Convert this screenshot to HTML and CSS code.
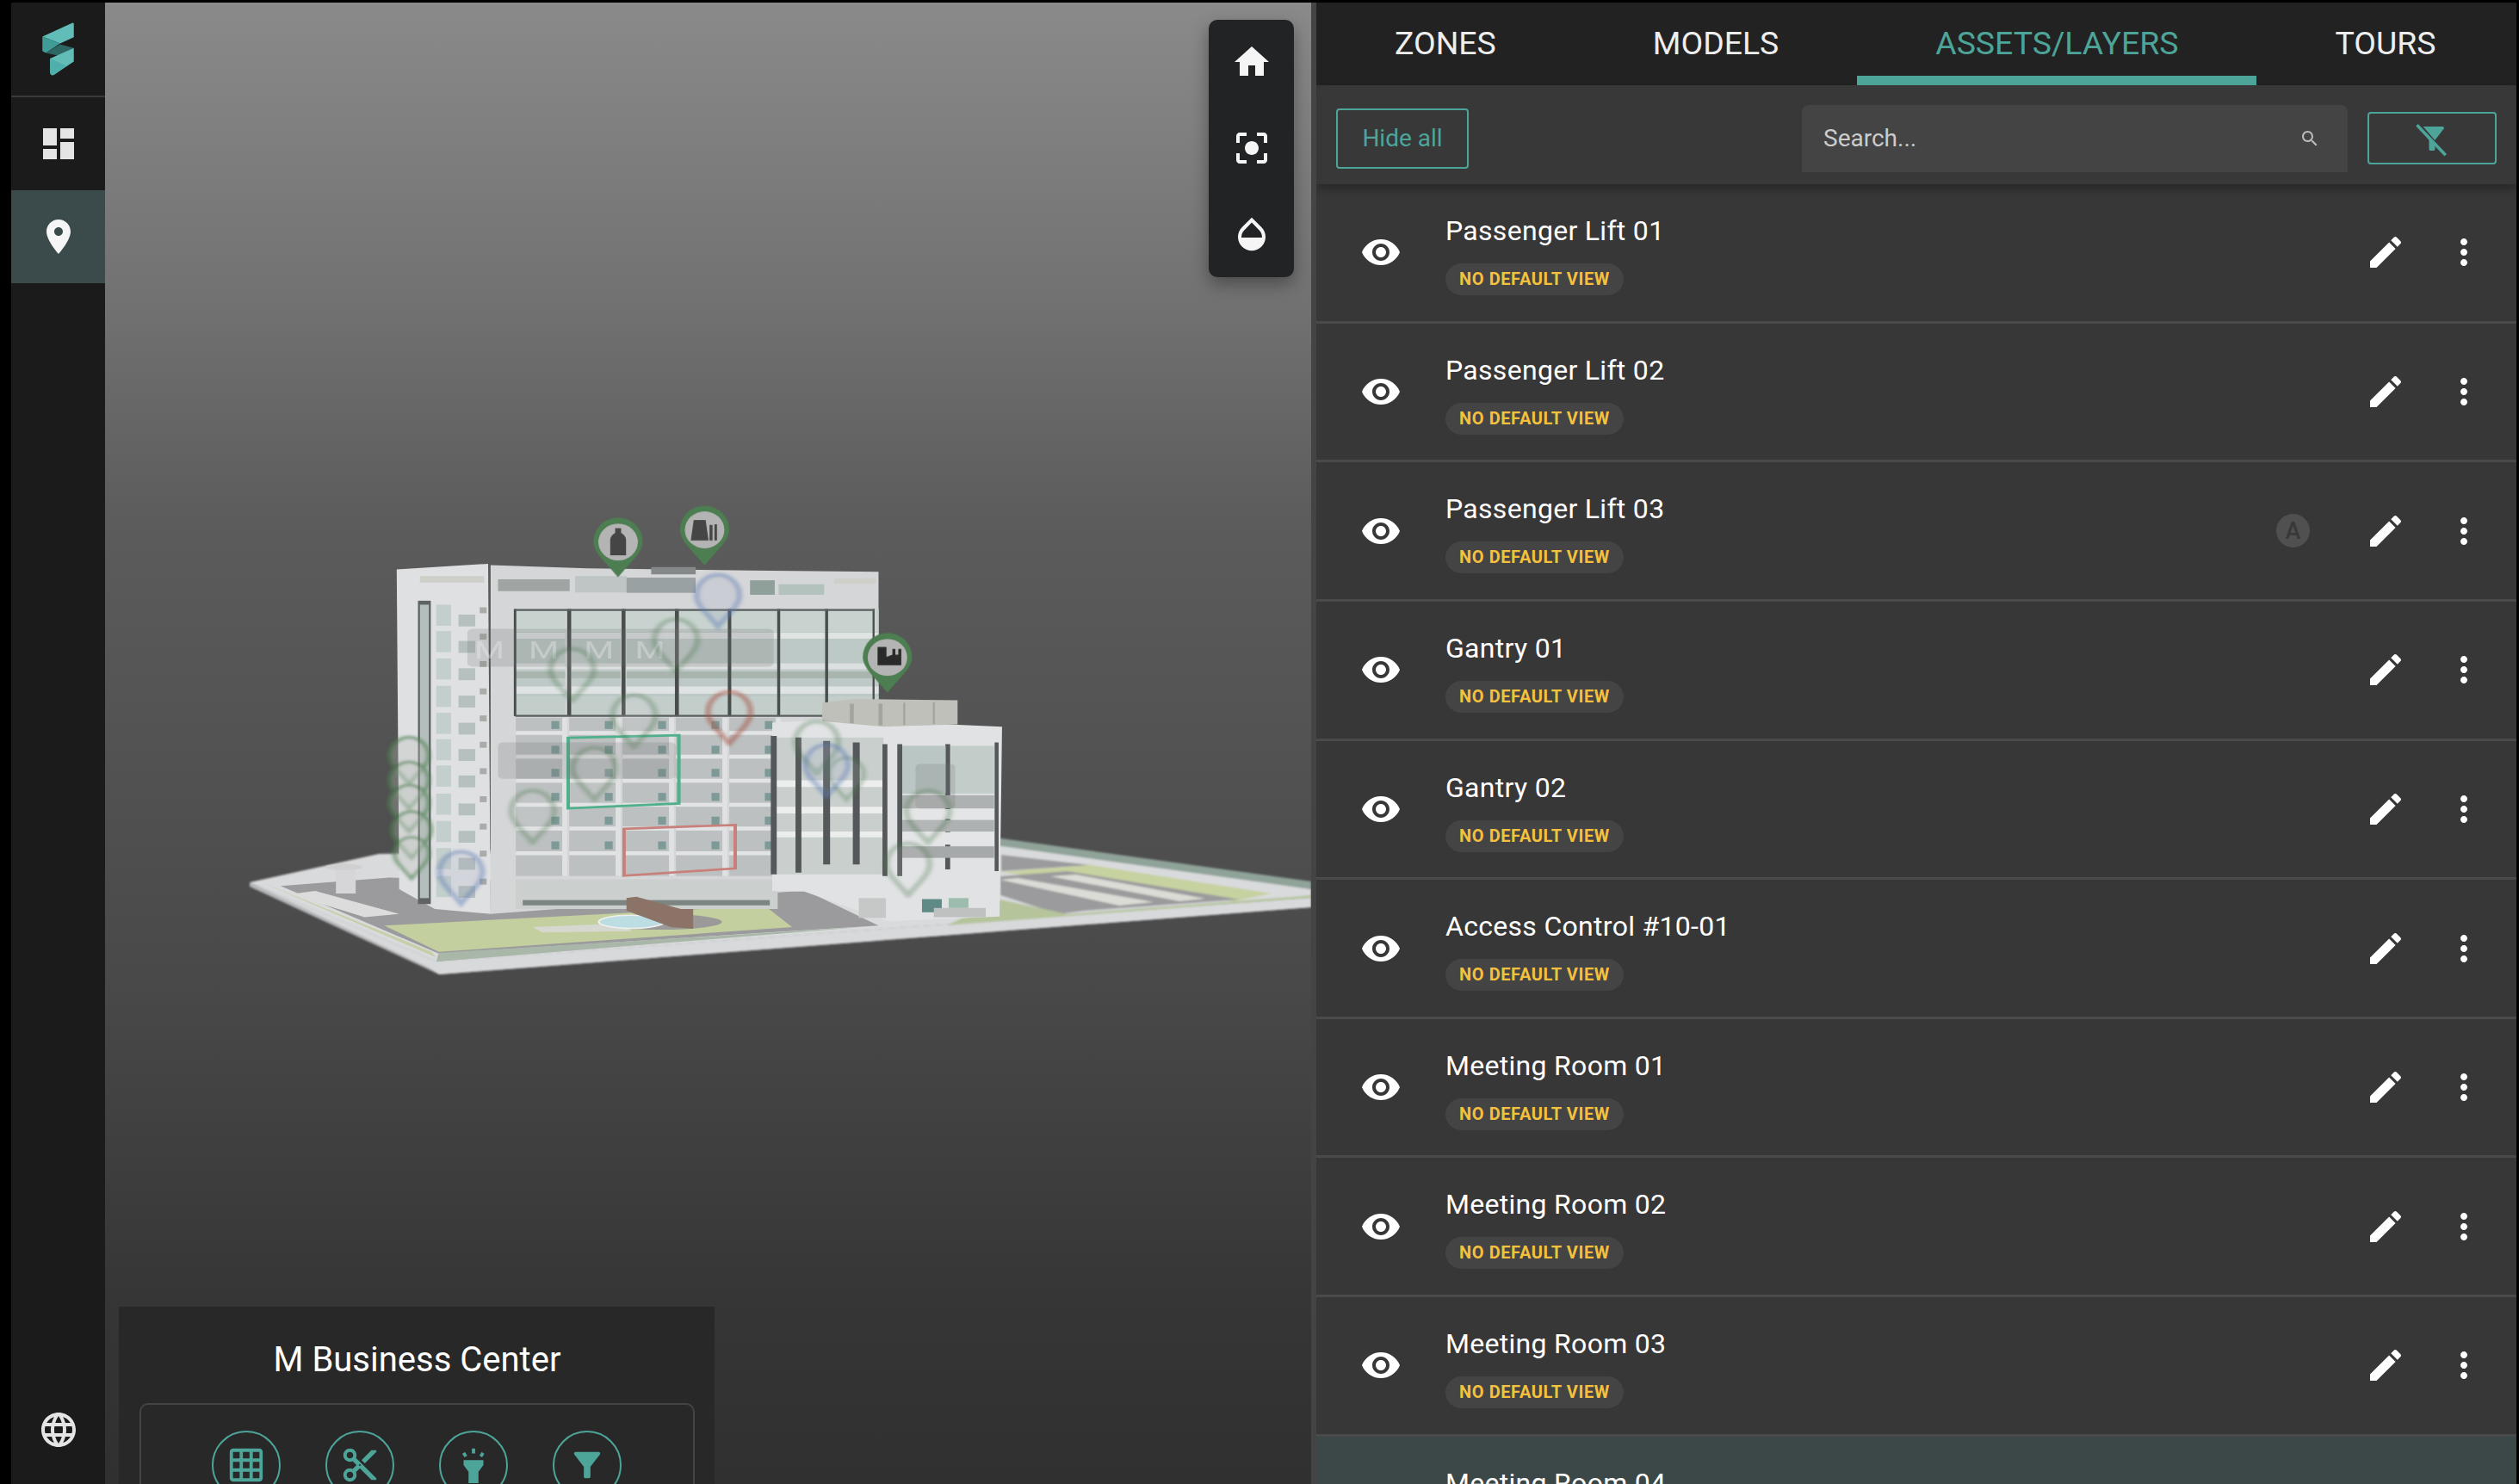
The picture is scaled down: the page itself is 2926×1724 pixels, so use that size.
FILE: index.html
```html
<!DOCTYPE html>
<html lang="en">
<head>
  <meta charset="UTF-8">
  <meta name="viewport" content="width=device-width, initial-scale=1.0">
  <title>M Business Center</title>
  <link rel="stylesheet" href="styles.css">
</head>
<body>
  <svg class="sprite" xmlns="http://www.w3.org/2000/svg">
    <symbol id="i-eye" viewBox="0 0 24 24"><path d="M12 4.5C7 4.5 2.73 7.61 1 12c1.73 4.39 6 7.5 11 7.5s9.27-3.11 11-7.5c-1.73-4.39-6-7.5-11-7.5zM12 17c-2.76 0-5-2.24-5-5s2.24-5 5-5 5 2.24 5 5-2.24 5-5 5zm0-8c-1.66 0-3 1.34-3 3s1.34 3 3 3 3-1.34 3-3-1.34-3-3-3z"/></symbol>
    <symbol id="i-edit" viewBox="0 0 24 24"><path d="M3 17.25V21h3.75L17.81 9.94l-3.75-3.75L3 17.25zM20.71 7.04c.39-.39.39-1.02 0-1.41l-2.34-2.34c-.39-.39-1.02-.39-1.41 0l-1.83 1.83 3.75 3.75 1.83-1.83z"/></symbol>
    <symbol id="i-more" viewBox="0 0 24 24"><path d="M12 8c1.1 0 2-.9 2-2s-.9-2-2-2-2 .9-2 2 .9 2 2 2zm0 2c-1.1 0-2 .9-2 2s.9 2 2 2 2-.9 2-2-.9-2-2-2zm0 6c-1.1 0-2 .9-2 2s.9 2 2 2 2-.9 2-2-.9-2-2-2z"/></symbol>
    <symbol id="i-pin" viewBox="-60 -85 120 205"><path d="M0 112C-25 65-52 35-52-2A52 75 0 1 1 52-2C52 35 25 65 0 112Z"/></symbol>
  </svg>

  <nav class="sidebar">
    <div class="side-item logo">
      <svg viewBox="148 78 110 187" width="37" height="62">
        <path fill="#62bcb7" d="M148 128 252 80q6-2 6 4v46l-48 22z"/>
        <path fill="#3f9c97" d="M148 128l62 24-50 33-10-5q-2-2-2-5z"/>
        <path fill="#2e6664" d="M160 185l50-30 48 13-53 27z"/>
        <path fill="#62bcb7" d="M258 168v47l-70 47q-10 4-13-7v-50z"/>
        <path fill="#4fb0ab" d="M175 205l57 25-44 32q-10 4-13-7z"/>
      </svg>
    </div>
    <div class="side-item">
      <svg class="icon-side" viewBox="0 0 24 24"><path d="M3 13h8V3H3v10zm0 8h8v-6H3v6zm10 0h8V11h-8v10zm0-18v6h8V3h-8z"/></svg>
    </div>
    <div class="side-item active">
      <svg class="icon-side white" viewBox="0 0 24 24"><path d="M12 2C8.13 2 5 5.13 5 9c0 5.25 7 13 7 13s7-7.75 7-13c0-3.87-3.13-7-7-7zm0 9.5c-1.38 0-2.5-1.12-2.5-2.5s1.12-2.5 2.5-2.5 2.5 1.12 2.5 2.5-1.12 2.5-2.5 2.5z"/></svg>
    </div>
    <div class="side-item globe">
      <svg class="icon-side" viewBox="0 0 24 24"><path d="M11.99 2C6.47 2 2 6.48 2 12s4.47 10 9.99 10C17.52 22 22 17.52 22 12S17.52 2 11.99 2zm6.93 6h-2.95c-.32-1.25-.78-2.45-1.38-3.56 1.84.63 3.37 1.91 4.33 3.56zM12 4.04c.83 1.2 1.48 2.53 1.91 3.96h-3.82c.43-1.43 1.08-2.76 1.91-3.96zM4.26 14C4.1 13.36 4 12.69 4 12s.1-1.36.26-2h3.38c-.08.66-.14 1.32-.14 2 0 .68.06 1.34.14 2H4.26zm.82 2h2.95c.32 1.25.78 2.45 1.38 3.56-1.84-.63-3.37-1.9-4.33-3.56zm2.95-8H5.08c.96-1.66 2.49-2.93 4.33-3.56C8.81 5.55 8.35 6.75 8.03 8zM12 19.96c-.83-1.2-1.48-2.53-1.91-3.96h3.82c-.43 1.43-1.08 2.76-1.91 3.96zM14.34 14H9.66c-.09-.66-.16-1.32-.16-2 0-.68.07-1.35.16-2h4.68c.09.65.16 1.32.16 2 0 .68-.07 1.34-.16 2zm.25 5.56c.6-1.11 1.06-2.31 1.38-3.56h2.95c-.96 1.65-2.49 2.93-4.33 3.56zM16.36 14c.08-.66.14-1.32.14-2 0-.68-.06-1.34-.14-2h3.38c.16.64.26 1.31.26 2s-.1 1.36-.26 2h-3.38z"/></svg>
    </div>
  </nav>

  <main class="viewer">
    <svg class="scene" viewBox="122 3 1401 1721" xmlns="http://www.w3.org/2000/svg">
      <defs>
        <filter id="soft"><feGaussianBlur stdDeviation="0.8"/></filter>
        <filter id="haze" x="-10%" y="-10%" width="120%" height="120%"><feGaussianBlur stdDeviation="4"/></filter>
        <g id="bay-top">
          <rect width="100" height="325" fill="#bdc9c6"/>
          <rect y="0" width="100" height="70" fill="#c8d2cf"/>
          <rect y="72" width="100" height="18" fill="#dfe3e2"/>
          <rect y="165" width="100" height="18" fill="#dcdfdf"/>
          <rect y="235" width="100" height="22" fill="#e0e3e3"/>
          <rect y="190" width="100" height="20" fill="#a9b4ae"/>
          <rect y="265" width="100" height="55" fill="#c3cdca"/>
        </g>
        <g id="bay-low">
          <rect width="100" height="480" fill="#bcc0c0"/>
          <rect y="40" width="100" height="12" fill="#e2e3e4"/>
          <rect y="112" width="100" height="12" fill="#e2e3e4"/>
          <rect y="185" width="100" height="12" fill="#e2e3e4"/>
          <rect y="258" width="100" height="12" fill="#e2e3e4"/>
          <rect y="330" width="100" height="12" fill="#e2e3e4"/>
          <rect y="405" width="100" height="12" fill="#e2e3e4"/>
          <rect x="94" width="10" height="480" fill="#e0e1e2"/>
          <rect x="72" y="10" width="16" height="24" fill="#7e9a98"/>
          <rect x="72" y="85" width="16" height="24" fill="#7e9a98"/>
          <rect x="72" y="155" width="16" height="24" fill="#7e9a98"/>
          <rect x="72" y="228" width="16" height="24" fill="#7e9a98"/>
          <rect x="72" y="300" width="16" height="24" fill="#7e9a98"/>
          <rect x="72" y="375" width="16" height="24" fill="#7e9a98"/>
        </g>
        <g id="side-win">
          <rect x="395" width="30" height="64" fill="#c3cfcc"/>
          <rect x="440" y="30" width="34" height="36" fill="#b6c0be"/>
          <rect x="483" y="8" width="14" height="18" fill="#a9aca8"/>
        </g>
      </defs>

      <!-- ground slab, page coordinates -->
      <g filter="url(#soft)">
        <path fill="#b5b6b8" d="M290 1025 507 1117 1523 1043v11L510 1132 290 1030z"/>
        <path fill="#d8d9db" d="M290 1025 507 1117 1523 1043v11L510 1132 500 1125z"/>
        <path fill="#8fa399" d="M440 990 1163 974 1523 1024v9L1163 986z"/>
        <path fill="#d9dadc" d="M290 1025 440 992 1163 983 1523 1033v10L507 1117z"/>
        <path fill="#9b9b9d" d="M1163 993 1267 1005 1163 1012z"/>
        <path fill="#c6d29f" d="M1162 1013 1267 1005 1477 1038 1433 1047z"/>
        <path fill="#9b9b9d" d="M1162 1018 1240 1012 1440 1045 1260 1058 1230 1062 1162 1040z"/>
        <path fill="#dcdcd6" d="M1162 1022 1182 1020 1340 1048 1300 1052z"/>
        <path fill="#dcdcd6" d="M1220 1018 1250 1016 1400 1044 1370 1047z"/>
        <path fill="#b5c49b" d="M1162 1045 1240 1062 1290 1058 1500 1042 1523 1040V1043L1100 1075z"/>
      </g>

      <!-- building, drawn from a crop stretched to 1568x1568 -->
      <g transform="translate(280 560) scale(.574 .383)" filter="url(#soft)">
        <path fill="#9b9b9d" d="M80 1225 300 1200 1130 1230 1290 1345 400 1430z"/>
        <path fill="#c3cf9f" d="M290 1345 1060 1285 1115 1350 400 1425z"/>
        <path fill="#d6d8d0" d="M590 1350 780 1338 790 1362 610 1366z"/>
        <path fill="#a9b7a8" d="M400 1428 1230 1352 1290 1345 395 1455z"/>
        <path fill="#c5cfa5" d="M55 1222 385 1425 395 1442 45 1216z"/>
        <path fill="#dcdcdc" d="M100 1250 150 1240 320 1310 250 1320z"/>

        <path fill="#dfe0e2" d="M315 265 500 248 505 1310 392 1295 320 1235z"/>
        <path fill="#d5d6d8" d="M505 252 700 262 1030 268 1290 272 1290 720 1130 730 1130 1240 505 1310z"/>
        <rect x="520" y="295" width="145" height="36" fill="#a0a5a4"/>
        <rect x="676" y="285" width="104" height="50" fill="#bfc4c4"/>
        <rect x="780" y="290" width="140" height="46" fill="#9aa1a3"/>
        <rect x="830" y="258" width="90" height="22" fill="#85898a"/>
        <rect x="1030" y="298" width="50" height="44" fill="#8f9f9a"/>
        <rect x="1088" y="310" width="92" height="32" fill="#b3c2bc"/>
        <rect x="362" y="285" width="130" height="20" fill="#cfcfca"/>
        <rect x="1200" y="292" width="85" height="16" fill="#cfcfca"/>

        <use href="#bay-top" x="556" y="385"/>
        <use href="#bay-top" x="668" y="385"/>
        <use href="#bay-top" x="780" y="385"/>
        <use href="#bay-top" x="886" y="385"/>
        <use href="#bay-top" x="992" y="385"/>
        <use href="#bay-top" x="1092" y="385"/>
        <use href="#bay-top" x="1190" y="385"/>
        <g fill="#4a4d4c">
          <rect x="552" y="385" width="5" height="325"/><rect x="660" y="385" width="8" height="325"/>
          <rect x="770" y="385" width="8" height="325"/><rect x="878" y="385" width="8" height="325"/>
          <rect x="985" y="385" width="7" height="325"/><rect x="1085" y="385" width="6" height="325"/>
          <rect x="1182" y="385" width="6" height="325"/><rect x="1278" y="385" width="4" height="325"/>
        </g>
        <path fill="#5b5f5e" d="M555 385H1282V391H555zM555 706H1282V712H555z"/>

        <use href="#bay-low" x="556" y="715"/>
        <use href="#bay-low" x="664" y="715"/>
        <use href="#bay-low" x="772" y="715"/>
        <use href="#bay-low" x="880" y="715"/>
        <use href="#bay-low" x="988" y="715"/>
        <rect x="556" y="1205" width="530" height="90" fill="#cbcfce"/>
        <rect x="570" y="1268" width="500" height="16" fill="#7c8582"/>

        <rect x="358" y="360" width="26" height="920" fill="#5e6463"/>
        <rect x="362" y="372" width="18" height="890" fill="#b4bfbd"/>
        <use href="#side-win" y="372"/><use href="#side-win" y="452"/><use href="#side-win" y="535"/>
        <use href="#side-win" y="618"/><use href="#side-win" y="700"/><use href="#side-win" y="780"/>
        <use href="#side-win" y="860"/><use href="#side-win" y="945"/><use href="#side-win" y="1028"/>
        <use href="#side-win" y="1110"/><use href="#side-win" y="1195"/>

        <path fill="none" stroke="#4fb08c" stroke-width="7" d="M662 776 886 768V975L662 990z"/>
        <path fill="none" stroke="#c97f7a" stroke-width="7" d="M775 1052 1000 1040V1172L775 1194z"/>

        <!-- annex -->
        <path fill="#e1e2e4" d="M1075 730 1200 720 1540 742 1535 1318 1310 1332 1140 1242 1075 1240z"/>
        <path fill="#c0c0ba" d="M1176 670 1240 658 1450 662 1450 735 1300 742 1176 725z"/>
        <path fill="#a4a49e" d="M1232 672h8v60h-8zM1290 672h8v66h-8zM1340 670h4v66h-4zM1400 668h4v66h-4z"/>
        <rect x="1080" y="775" width="220" height="415" fill="#c8cfcd"/>
        <path fill="#eceded" d="M1080 905H1300V925H1080zM1080 985H1300V1005H1080zM1080 1060H1300V1078H1080z"/>
        <path fill="#55595a" d="M1072 770h12v420h-12zM1122 775h12v410h-12zM1178 785h14v375h-14zM1238 790h14v370h-14zM1298 795h10v400h-10zM1328 795h10v400h-10zM1425 795h10v380h-10zM1525 790h8v390h-8z"/>
        <rect x="1338" y="800" width="88" height="145" fill="#b9c6c3"/>
        <rect x="1436" y="800" width="88" height="145" fill="#c2cdca"/>
        <rect x="1338" y="950" width="186" height="40" fill="#aeb1b1"/>
        <rect x="1338" y="1025" width="186" height="35" fill="#aeb1b1"/>
        <rect x="1338" y="1105" width="186" height="35" fill="#a6a9a9"/>
        <path fill="#e4e5e6" d="M1338 992H1524V1022H1338zM1338 1062H1524V1100H1338z"/>
        <rect x="1378" y="1265" width="40" height="40" fill="#5f8a86"/>
        <rect x="1432" y="1262" width="40" height="30" fill="#9dbcae"/>
        <rect x="1250" y="1262" width="55" height="60" fill="#c6c8c8"/>
        <rect x="1402" y="1292" width="105" height="28" fill="#bfc0c0"/>

        <!-- gatehouse and courtyard -->
        <path fill="#d6d6d8" d="M192 1172h40v76h-40z"/>
        <ellipse cx="208" cy="1168" rx="38" ry="10" fill="#cfd0cf"/>
        <ellipse cx="848" cy="1334" rx="125" ry="24" fill="#9b9a98"/>
        <ellipse cx="790" cy="1334" rx="66" ry="20" fill="#bcdde2" stroke="#efefef" stroke-width="4"/>
        <path fill="#8b7368" d="M780 1262 800 1258 890 1295 915 1295 915 1355 870 1350 780 1300z"/>

        <!-- faded markers, seen through the model -->
        <g fill="#6c6c6c" opacity=".2">
          <rect x="458" y="445" width="620" height="115" rx="12"/>
          <rect x="520" y="790" width="360" height="110" rx="10"/>
          <rect x="1365" y="855" width="80" height="135" rx="10"/>
        </g>
        <g opacity=".35">
          <text class="tag" x="472" y="535">M</text><text class="tag" x="582" y="535">M</text>
          <text class="tag" x="694" y="535">M</text><text class="tag" x="797" y="535">M</text>
        </g>
        <g opacity=".3" fill="#e8e8e8" fill-opacity=".35" stroke="#4b7a4f" stroke-width="16" filter="url(#haze)">
          <use href="#i-pin" x="620" y="500" width="100" height="170"/>
          <use href="#i-pin" x="830" y="410" width="100" height="170"/>
          <use href="#i-pin" x="745" y="640" width="100" height="170"/>
          <use href="#i-pin" x="665" y="800" width="100" height="170"/>
          <use href="#i-pin" x="540" y="930" width="100" height="170"/>
          <use href="#i-pin" x="1115" y="720" width="100" height="170"/>
          <use href="#i-pin" x="1185" y="820" width="80" height="160"/>
          <use href="#i-pin" x="1340" y="930" width="100" height="170"/>
          <use href="#i-pin" x="1300" y="1090" width="100" height="170"/>
        </g>
        <g opacity=".65" fill="#b8bdb8" fill-opacity=".5" stroke="#4d8050" stroke-width="12" filter="url(#haze)">
          <use href="#i-pin" x="295" y="760" width="90" height="170"/>
          <use href="#i-pin" x="295" y="835" width="90" height="170"/>
          <use href="#i-pin" x="295" y="905" width="90" height="170"/>
          <use href="#i-pin" x="300" y="985" width="90" height="170"/>
          <use href="#i-pin" x="305" y="1060" width="80" height="160"/>
        </g>
        <g opacity=".45" fill="#9aa6c0" fill-opacity=".4" stroke="#5d7cb5" stroke-width="14" filter="url(#haze)">
          <use href="#i-pin" x="915" y="265" width="100" height="190"/>
          <use href="#i-pin" x="395" y="1105" width="100" height="190"/>
          <use href="#i-pin" x="1135" y="790" width="100" height="170"/>
        </g>
        <use href="#i-pin" x="938" y="630" width="100" height="170" fill="none" stroke="#a85a4c" stroke-width="14" opacity=".55" filter="url(#haze)"/>

        <!-- solid markers on top -->
        <g fill="#4e7e51">
          <use href="#i-pin" x="705.5" y="100" width="115" height="197"/>
          <use href="#i-pin" x="880.5" y="64" width="115" height="197"/>
          <use href="#i-pin" x="1250.5" y="450" width="115" height="197"/>
        </g>
        <ellipse cx="763" cy="182" rx="40" ry="56" fill="#b4b4b4"/>
        <ellipse cx="938" cy="145" rx="40" ry="56" fill="#b4b4b4"/>
        <ellipse cx="1308" cy="532" rx="40" ry="56" fill="#b4b4b4"/>
        <path fill="#444" d="M757 140h12v14q10 8 10 22v46h-32v-46q0-14 10-22z"/>
        <path fill="#444" d="M916 115h24l6 62h-36zM948 130h6v47h-6zM958 128h5v49h-5z"/>
        <path fill="#2a2a2a" d="M1288 500h18v30l12-6v-18h6v18h6v-18h6v50h-48z"/>
      </g>
    </svg>

    <div class="view-tools">
      <svg viewBox="0 0 24 24"><path d="M10 20v-6h4v6h5v-8h3L12 3 2 12h3v8z"/></svg>
      <svg viewBox="0 0 24 24"><path d="M12 8c-2.21 0-4 1.79-4 4s1.79 4 4 4 4-1.79 4-4-1.79-4-4-4zm-7 7H3v4c0 1.1.9 2 2 2h4v-2H5v-4zM5 5h4V3H5c-1.1 0-2 .9-2 2v4h2V5zm14-2h-4v2h4v4h2V5c0-1.1-.9-2-2-2zm0 16h-4v2h4c1.1 0 2-.9 2-2v-4h-2v4z"/></svg>
      <svg viewBox="0 0 24 24"><path d="M17.66 8L12 2.35 6.34 8C4.78 9.56 4 11.64 4 13.64s.78 4.11 2.34 5.67 3.61 2.35 5.66 2.35 4.1-.79 5.66-2.35S20 15.64 20 13.64 19.22 9.56 17.66 8zM6 14c.01-2 .62-3.27 1.76-4.4L12 5.27l4.24 4.38C17.38 10.77 17.99 12 18 14H6z"/></svg>
    </div>

    <section class="site-card">
      <h1>M Business Center</h1>
      <div class="site-tools">
        <span class="round"><svg viewBox="0 0 24 24"><path d="M20 2H4c-1.1 0-2 .9-2 2v16c0 1.1.9 2 2 2h16c1.1 0 2-.9 2-2V4c0-1.1-.9-2-2-2zM8 20H4v-4h4v4zm0-6H4v-4h4v4zm0-6H4V4h4v4zm6 12h-4v-4h4v4zm0-6h-4v-4h4v4zm0-6h-4V4h4v4zm6 12h-4v-4h4v4zm0-6h-4v-4h4v4zm0-6h-4V4h4v4z"/></svg></span>
        <span class="round"><svg viewBox="0 0 24 24"><path d="M9.64 7.64c.23-.5.36-1.05.36-1.64 0-2.21-1.79-4-4-4S2 3.79 2 6s1.79 4 4 4c.59 0 1.14-.13 1.64-.36L10 12l-2.36 2.36C7.14 14.13 6.59 14 6 14c-2.21 0-4 1.79-4 4s1.79 4 4 4 4-1.79 4-4c0-.59-.13-1.14-.36-1.64L12 14l7 7h3v-1L9.64 7.64zM6 8c-1.1 0-2-.89-2-2s.9-2 2-2 2 .89 2 2-.9 2-2 2zm0 12c-1.1 0-2-.89-2-2s.9-2 2-2 2 .89 2 2-.9 2-2 2zm6-7.5c-.28 0-.5-.22-.5-.5s.22-.5.5-.5.5.22.5.5-.22.5-.5.5zM19 3l-6 6 2 2 7-7V3z"/></svg></span>
        <span class="round"><svg viewBox="0 0 24 24"><path d="M11 2h2v3h-2zM5.2 5.2l1.6-1.1 1.4 2.1-1.6 1.1zM17.2 7.3l-1.6-1.1 1.4-2.1 1.6 1.1zM6 9h12v3l-3 4v7H9v-7l-3-4z"/></svg></span>
        <span class="round"><svg viewBox="0 0 24 24"><path d="M4.25 5.61C6.27 8.2 10 13 10 13v6c0 .55.45 1 1 1h2c.55 0 1-.45 1-1v-6s3.72-4.8 5.74-7.39c.51-.66.04-1.61-.79-1.61H5.04c-.83 0-1.3.95-.79 1.61z"/></svg></span>
      </div>
    </section>
  </main>

  <div class="splitter"></div>

  <aside class="panel">
    <div class="tabs">
      <a class="tab">ZONES</a>
      <a class="tab">MODELS</a>
      <a class="tab selected">ASSETS/LAYERS</a>
      <a class="tab">TOURS</a>
    </div>

    <div class="toolbar">
      <button class="btn-outline">Hide all</button>
      <div class="search">
        <span>Search...</span>
        <svg viewBox="0 0 24 24"><path d="M15.5 14h-.79l-.28-.27C15.41 12.59 16 11.11 16 9.5 16 5.91 13.09 3 9.5 3S3 5.91 3 9.5 5.91 16 9.5 16c1.61 0 3.09-.59 4.23-1.57l.27.28v.79l5 4.99L20.49 19l-4.99-5zm-6 0C7.01 14 5 11.99 5 9.5S7.01 5 9.5 5 14 7.01 14 9.5 11.99 14 9.5 14z"/></svg>
      </div>
      <button class="btn-outline btn-filter">
        <svg viewBox="0 0 24 24"><path d="M4.25 5.61C6.27 8.2 10 13 10 13v6c0 .55.45 1 1 1h2c.55 0 1-.45 1-1v-6s3.72-4.8 5.74-7.39c.51-.66.04-1.61-.79-1.61H5.04c-.83 0-1.3.95-.79 1.61z"/><path class="gap" d="M3 2 21 23"/><path class="slash" d="M2 3 21 23"/></svg>
      </button>
    </div>

    <ul class="list">
      <li class="row">
        <svg class="ico eye"><use href="#i-eye"/></svg>
        <div class="info"><div class="name">Passenger Lift 01</div><span class="chip">NO DEFAULT VIEW</span></div>
        <svg class="ico"><use href="#i-edit"/></svg>
        <svg class="ico"><use href="#i-more"/></svg>
      </li>
      <li class="row">
        <svg class="ico eye"><use href="#i-eye"/></svg>
        <div class="info"><div class="name">Passenger Lift 02</div><span class="chip">NO DEFAULT VIEW</span></div>
        <svg class="ico"><use href="#i-edit"/></svg>
        <svg class="ico"><use href="#i-more"/></svg>
      </li>
      <li class="row">
        <svg class="ico eye"><use href="#i-eye"/></svg>
        <div class="info"><div class="name">Passenger Lift 03</div><span class="chip">NO DEFAULT VIEW</span></div>
        <span class="avatar">A</span>
        <svg class="ico"><use href="#i-edit"/></svg>
        <svg class="ico"><use href="#i-more"/></svg>
      </li>
      <li class="row">
        <svg class="ico eye"><use href="#i-eye"/></svg>
        <div class="info"><div class="name">Gantry 01</div><span class="chip">NO DEFAULT VIEW</span></div>
        <svg class="ico"><use href="#i-edit"/></svg>
        <svg class="ico"><use href="#i-more"/></svg>
      </li>
      <li class="row">
        <svg class="ico eye"><use href="#i-eye"/></svg>
        <div class="info"><div class="name">Gantry 02</div><span class="chip">NO DEFAULT VIEW</span></div>
        <svg class="ico"><use href="#i-edit"/></svg>
        <svg class="ico"><use href="#i-more"/></svg>
      </li>
      <li class="row">
        <svg class="ico eye"><use href="#i-eye"/></svg>
        <div class="info"><div class="name">Access Control #10-01</div><span class="chip">NO DEFAULT VIEW</span></div>
        <svg class="ico"><use href="#i-edit"/></svg>
        <svg class="ico"><use href="#i-more"/></svg>
      </li>
      <li class="row">
        <svg class="ico eye"><use href="#i-eye"/></svg>
        <div class="info"><div class="name">Meeting Room 01</div><span class="chip">NO DEFAULT VIEW</span></div>
        <svg class="ico"><use href="#i-edit"/></svg>
        <svg class="ico"><use href="#i-more"/></svg>
      </li>
      <li class="row">
        <svg class="ico eye"><use href="#i-eye"/></svg>
        <div class="info"><div class="name">Meeting Room 02</div><span class="chip">NO DEFAULT VIEW</span></div>
        <svg class="ico"><use href="#i-edit"/></svg>
        <svg class="ico"><use href="#i-more"/></svg>
      </li>
      <li class="row">
        <svg class="ico eye"><use href="#i-eye"/></svg>
        <div class="info"><div class="name">Meeting Room 03</div><span class="chip">NO DEFAULT VIEW</span></div>
        <svg class="ico"><use href="#i-edit"/></svg>
        <svg class="ico"><use href="#i-more"/></svg>
      </li>
      <li class="row current">
        <svg class="ico eye"><use href="#i-eye"/></svg>
        <div class="info"><div class="name">Meeting Room 04</div><span class="chip">NO DEFAULT VIEW</span></div>
        <svg class="ico"><use href="#i-edit"/></svg>
        <svg class="ico"><use href="#i-more"/></svg>
      </li>
    </ul>
  </aside>
</body>
</html>
```

FILE: styles.css
```css
* {
  box-sizing: border-box;
}
html, body {
  height: 100%;
}
body {
  margin: 0;
  padding: 3px 3px 0 13px;
  display: flex;
  overflow: hidden;
  background: #000;
  color: #fff;
  font-family: Roboto, "Liberation Sans", sans-serif;
}
.sprite {
  display: none;
}

/* left rail */
.sidebar {
  width: 109px;
  flex: none;
  display: flex;
  flex-direction: column;
  background: #1b1b1b;
}
.side-item {
  height: 108px;
  flex: none;
  display: flex;
  align-items: center;
  justify-content: center;
}
.side-item.logo {
  height: 110px;
  border-bottom: 2px solid #3a3a3a;
}
.side-item.active {
  background: #3b4a4a;
}
.side-item.globe {
  margin-top: auto;
  margin-bottom: 9px;
}
.icon-side {
  width: 48px;
  height: 48px;
  fill: #e4e4e4;
}
.icon-side.white {
  fill: #f6f6f6;
}

/* 3d view */
.viewer {
  position: relative;
  flex: 1;
  overflow: hidden;
  background: linear-gradient(#8a8a8a 0, #727272 340px, #5c5c5c 600px, #484848 1160px, #363636 1500px, #303030 100%);
}
.scene {
  position: absolute;
  left: 0;
  top: 0;
  width: 100%;
  height: 100%;
}
.tag {
  font: 70px Roboto, sans-serif;
  fill: #f2f2f2;
}
.view-tools {
  position: absolute;
  top: 20px;
  right: 20px;
  width: 99px;
  height: 299px;
  padding: 25px 0 26px;
  display: flex;
  flex-direction: column;
  align-items: center;
  justify-content: space-between;
  background: #212325;
  border-radius: 10px;
  box-shadow: 0 8px 20px rgba(0, 0, 0, 0.35);
}
.view-tools svg {
  width: 48px;
  height: 48px;
  fill: #f5f5f5;
}
.site-card {
  position: absolute;
  left: 16px;
  bottom: 0;
  width: 692px;
  height: 206px;
  padding: 0 23px 0 24px;
  overflow: hidden;
  background: #282828;
}
.site-card h1 {
  margin: 0;
  height: 112px;
  line-height: 124px;
  font-size: 40px;
  font-weight: 400;
  text-align: center;
}
.site-tools {
  height: 200px;
  padding: 30px 0 0 82px;
  display: flex;
  gap: 52px;
  border: 2px solid #444;
  border-radius: 10px;
}
.round {
  width: 80px;
  height: 80px;
  flex: none;
  display: flex;
  align-items: center;
  justify-content: center;
  border: 2px solid #4da59a;
  border-radius: 50%;
}
.round svg {
  width: 46px;
  height: 46px;
  fill: #4da59a;
}

.splitter {
  width: 6px;
  flex: none;
  background: #444;
}

/* right panel */
.panel {
  width: 1394px;
  flex: none;
  overflow: hidden;
  background: #373737;
}
.tabs {
  height: 96px;
  display: flex;
  background: #222;
}
.tab {
  padding: 9px 91px 0;
  display: flex;
  align-items: center;
  font-size: 37.4px;
  border-bottom: 11px solid transparent;
  color: #eee;
}
.tab.selected {
  color: #4da59a;
  border-bottom-color: #4da59a;
}
.toolbar {
  height: 115px;
  padding: 8px 23px 0;
  display: flex;
  align-items: center;
  position: relative;
  background: #383838;
  border-radius: 10px 10px 0 0;
  box-shadow: 0 6px 10px rgba(0, 0, 0, 0.25);
}
.btn-outline {
  height: 70px;
  width: 154px;
  padding: 0;
  background: none;
  border: 2px solid #4da59a;
  border-radius: 4px;
  color: #4da59a;
  font: 28px Roboto, sans-serif;
}
.search {
  width: 634px;
  height: 78px;
  margin-left: auto;
  padding: 0 32px 0 25px;
  display: flex;
  align-items: center;
  justify-content: space-between;
  background: #444;
  border-radius: 8px 8px 0 0;
  color: #ccc;
  font-size: 28px;
}
.search svg {
  width: 24px;
  height: 24px;
  fill: #bbb;
}
.btn-filter {
  width: 150px;
  height: 61px;
  margin-left: 23px;
  display: flex;
  align-items: center;
  justify-content: center;
}
.btn-filter svg {
  width: 42px;
  height: 42px;
  fill: #4da59a;
}
.btn-filter .gap {
  stroke: #383838;
  stroke-width: 2;
  fill: none;
}
.btn-filter .slash {
  stroke: #4da59a;
  stroke-width: 2;
  fill: none;
}

.list {
  margin: 0;
  padding: 0;
  list-style: none;
}
.row {
  height: 161.65px;
  padding: 0 37px 0 51px;
  display: flex;
  align-items: center;
  border-bottom: 3px solid #4a4a4a;
}
.row.current {
  background: #3c4748;
}
.ico {
  width: 48px;
  height: 48px;
  flex: none;
  fill: #fff;
}
.ico + .ico {
  margin-left: 43px;
}
.eye {
  margin-right: 51px;
}
.info {
  flex: 1;
  align-self: flex-start;
  padding-top: 35px;
}
.name {
  height: 38px;
  line-height: 38px;
  font-size: 32px;
  letter-spacing: .3px;
  margin-bottom: 19px;
}
.chip {
  display: inline-block;
  height: 37px;
  line-height: 37px;
  padding: 0 16px;
  border-radius: 19px;
  background: #444;
  color: #f5c13d;
  font-size: 20px;
  font-weight: 700;
  letter-spacing: .6px;
}
.avatar {
  width: 39px;
  height: 39px;
  margin-right: 64px;
  display: flex;
  align-items: center;
  justify-content: center;
  border-radius: 50%;
  background: #505050;
  color: #383838;
  font-size: 27px;
  font-weight: 500;
}
```
